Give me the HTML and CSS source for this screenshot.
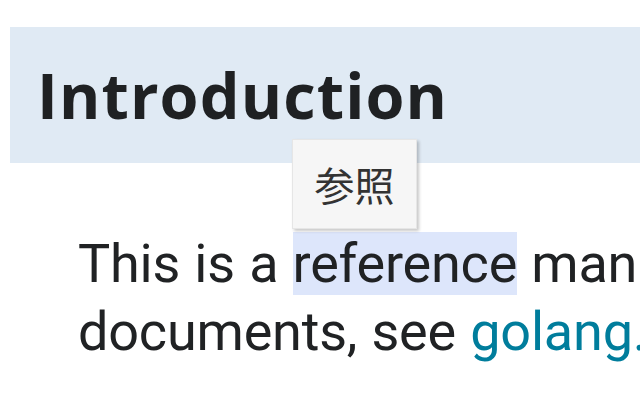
FILE: index.html
```html
<!DOCTYPE html>
<html lang="en">
<head>
<meta charset="utf-8">
<title>Introduction</title>
<link rel="stylesheet" href="styles.css">
</head>
<body>
<div class="page">
  <h1 class="section-title">Introduction</h1>
  <p class="intro">This is a <span class="hl">reference</span> manual for the Go programming language. For more information and other<br>documents, see <a class="link" href="#">golang.org</a>.</p>
</div>
<div class="tooltip">参照</div>
</body>
</html>
```
FILE: styles.css
```css
html, body {
  margin: 0;
  padding: 0;
  overflow: hidden;
  background: #ffffff;
}
body {
  width: 640px;
  height: 400px;
  position: relative;
}
.page {
  padding-top: 27px;
  padding-left: 10px;
  width: 2600px;
}
.section-title {
  margin: 0;
  height: 136px;
  padding-left: 27px;
  background: #e0eaf4;
  font-family: "Open Sans", "Noto Sans", sans-serif;
  font-weight: 700;
  font-size: 63px;
  letter-spacing: 1.1px;
  line-height: 136px;
  color: #1f2123;
}
.intro {
  margin: 67px 0 0 0;
  padding-left: 68px;
  font-family: Roboto, "Liberation Sans", sans-serif;
  font-size: 54px;
  letter-spacing: -0.2px;
  word-spacing: 1px;
  line-height: 68px;
  color: #202224;
  white-space: nowrap;
}
.hl {
  background: #dde6fb;
}
.link {
  color: #007d9c;
  text-decoration: none;
}
.tooltip {
  position: absolute;
  left: 292px;
  top: 139px;
  width: 125px;
  height: 90px;
  box-sizing: border-box;
  border: 1px solid #e6e6e6;
  background: #f6f6f6;
  box-shadow: 2px 2px 3px rgba(0, 0, 0, 0.22);
  display: flex;
  align-items: center;
  justify-content: center;
  font-family: "Noto Sans CJK JP", "Noto Sans CJK SC", sans-serif;
  font-size: 40px;
  color: #333333;
}
```
